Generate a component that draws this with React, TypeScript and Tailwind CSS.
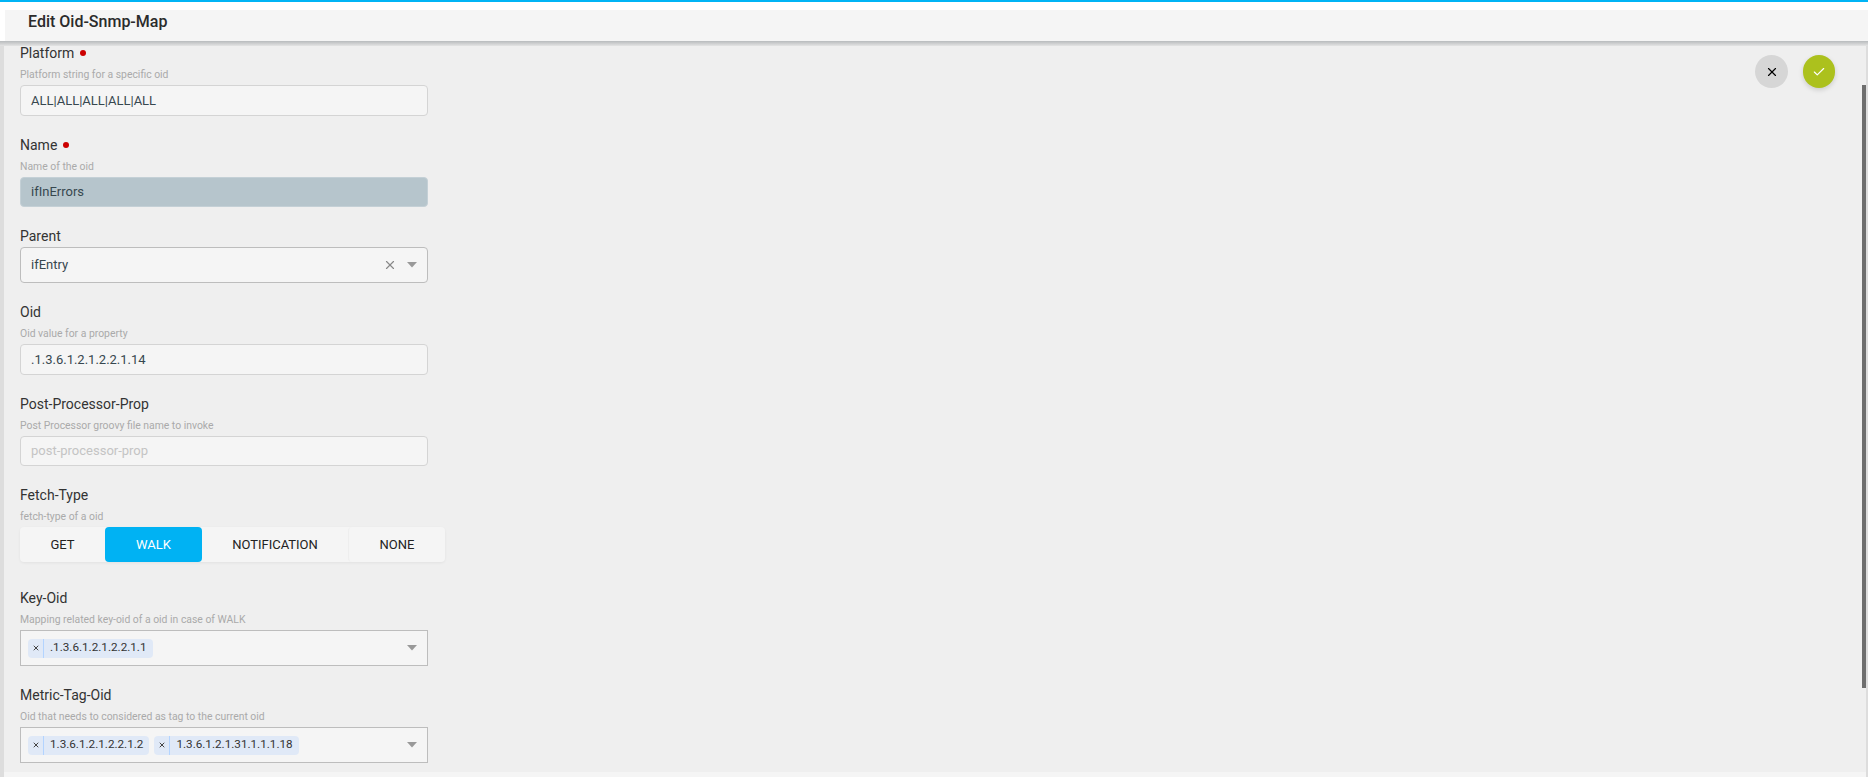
import { Check, X } from "lucide-react";
import type { ReactNode } from "react";

function Label({ text, required }: { text: string; required?: boolean }) {
  return (
    <div className="flex h-5 items-center gap-[6px] text-sm leading-5 text-[#333333]">
      {text}
      {required && <span className="h-[6px] w-[6px] rounded-full bg-[#cc0000]" />}
    </div>
  );
}

function Hint({ text }: { text: string }) {
  return <div className="flex h-[22px] items-center pt-px text-[10.4px] text-[#aaaaaa]">{text}</div>;
}

function Caret() {
  return (
    <svg viewBox="0 0 10 6" className="h-[6px] w-[10px] text-[#999999]">
      <path d="M0 0h10L5 5.5z" fill="currentColor" />
    </svg>
  );
}

function Chip({ text }: { text: string }) {
  return (
    <span className="flex h-[19px] items-center rounded-sm bg-[#e0e9f7] text-[11.7px] text-[#333333]">
      <span className="flex h-full w-4 items-center justify-center border-r border-[#b3d4ff] pl-px">
        <X className="h-2 w-2 text-[#444444]" strokeWidth={3} />
      </span>
      <span className="px-[6px]">{text}</span>
    </span>
  );
}

function TextField({
  label,
  hint,
  value,
  required,
  disabled,
  placeholder,
  height,
}: {
  label: string;
  hint: string;
  value?: string;
  required?: boolean;
  disabled?: boolean;
  placeholder?: string;
  height: string;
}) {
  return (
    <div>
      <Label text={label} required={required} />
      <Hint text={hint} />
      <div
        className={`flex w-[408px] items-center rounded border px-[10px] text-[13px] ${height} ${
          disabled ? "border-[#c4d0d6] bg-[#b6c5cc] text-[#37474f]" : "border-[#d4d4d4] bg-[#f5f5f5] text-[#37474f]"
        }`}
      >
        {value ?? <span className="text-[#c4c4c4]">{placeholder}</span>}
      </div>
    </div>
  );
}

function SelectBox({ children }: { children: ReactNode }) {
  return (
    <div className="flex h-9 w-[408px] items-center border border-[#bdbdbd] bg-[#f5f5f5] pl-[7px] pr-[10px]">
      <div className="flex flex-1 items-center gap-[5px]">{children}</div>
      <Caret />
    </div>
  );
}

const fetchTypes = [
  { name: "GET", width: "w-[85px]" },
  { name: "WALK", width: "w-[97px]" },
  { name: "NOTIFICATION", width: "w-[146px]" },
  { name: "NONE", width: "w-[97px]" },
];

export default function App() {
  return (
    <div className="relative h-[777px] w-[1868px] overflow-hidden bg-white font-['Roboto',sans-serif]">
      <div className="h-[2px] bg-[#00b4f5]" />
      <div className="h-2" />

      <header className="relative z-10 ml-[5px] flex h-[31px] items-center bg-[#f5f5f5] pb-2 pl-[23px] text-base font-medium text-[#2b2b2b]">
        Edit Oid-Snmp-Map
      </header>
      <div className="relative z-10 h-[5px] bg-gradient-to-b from-[#b8bbbd] to-[#e4e4e4]" />

      <div className="flex h-[731px] border-l-[4px] border-[#dddddd]">
        <main className="relative h-[726px] flex-1 overflow-hidden bg-[#efefef] pl-4">
          <div className="-mt-[3px] flex flex-col">
            <TextField
              label="Platform"
              required
              hint="Platform string for a specific oid"
              value="ALL|ALL|ALL|ALL|ALL"
              height="h-[31px]"
            />
            <div className="mt-[19px]">
              <TextField label="Name" required hint="Name of the oid" value="ifInErrors" disabled height="h-[30px]" />
            </div>
            <div className="mt-[19px]">
              <Label text="Parent" />
              <div className="mt-px">
                <div className="flex h-9 w-[408px] items-center rounded border border-[#bdbdbd] bg-[#f5f5f5] pl-[10px] pr-[10px] text-[13px] text-[#37474f]">
                  <span className="flex-1">ifEntry</span>
                  <X className="mr-[10px] h-[14px] w-[14px] text-[#888888]" strokeWidth={2} />
                  <Caret />
                </div>
              </div>
            </div>
            <div className="mt-[19px]">
              <TextField label="Oid" hint="Oid value for a property" value=".1.3.6.1.2.1.2.2.1.14" height="h-[31px]" />
            </div>
            <div className="mt-[19px]">
              <TextField
                label="Post-Processor-Prop"
                hint="Post Processor groovy file name to invoke"
                placeholder="post-processor-prop"
                height="h-[30px]"
              />
            </div>
            <div className="mt-[19px]">
              <Label text="Fetch-Type" />
              <Hint text="fetch-type of a oid" />
              <div className="flex h-[35px] w-[425px] rounded bg-[#f5f5f5] shadow-[0_1px_3px_rgba(0,0,0,0.06)]">
                {fetchTypes.map((item) => (
                  <div
                    key={item.name}
                    className={`flex items-center justify-center rounded text-[13px] ${item.width} ${
                      item.name === "WALK" ? "bg-[#00b2f3] text-white" : "text-[#222222]"
                    } ${item.name === "NONE" ? "border-l border-[#eeeeee]" : ""}`}
                  >
                    {item.name}
                  </div>
                ))}
              </div>
            </div>
            <div className="mt-[26px]">
              <Label text="Key-Oid" />
              <Hint text="Mapping related key-oid of a oid in case of WALK" />
              <SelectBox>
                <Chip text=".1.3.6.1.2.1.2.2.1.1" />
              </SelectBox>
            </div>
            <div className="mt-[19px]">
              <Label text="Metric-Tag-Oid" />
              <Hint text="Oid that needs to considered as tag to the current oid" />
              <SelectBox>
                <Chip text="1.3.6.1.2.1.2.2.1.2" />
                <Chip text="1.3.6.1.2.1.31.1.1.1.18" />
              </SelectBox>
            </div>
          </div>

          <div className="absolute right-[33px] top-[9px] flex gap-[15px]">
            <button type="button" className="flex h-[33px] w-[33px] items-center justify-center rounded-full bg-[#d6d6d6]">
              <X className="h-[14px] w-[14px] text-black" strokeWidth={2} />
            </button>
            <button
              type="button"
              className="flex h-[33px] w-[32px] items-center justify-center rounded-full bg-[#acc11d] shadow-[0_2px_5px_rgba(0,0,0,0.15)]"
            >
              <Check className="h-[14px] w-[14px] text-white" strokeWidth={2} />
            </button>
          </div>

          <div className="absolute right-[2px] top-[39px] h-[603px] w-1 bg-[#6e6e6e]" />
        </main>
      </div>
      <div className="absolute bottom-0 left-[4px] right-0 h-[5px] bg-[#f5f5f5]" />
      <div className="absolute bottom-0 right-0 top-[46px] w-[2px] bg-[#dddddd]" />
    </div>
  );
}
